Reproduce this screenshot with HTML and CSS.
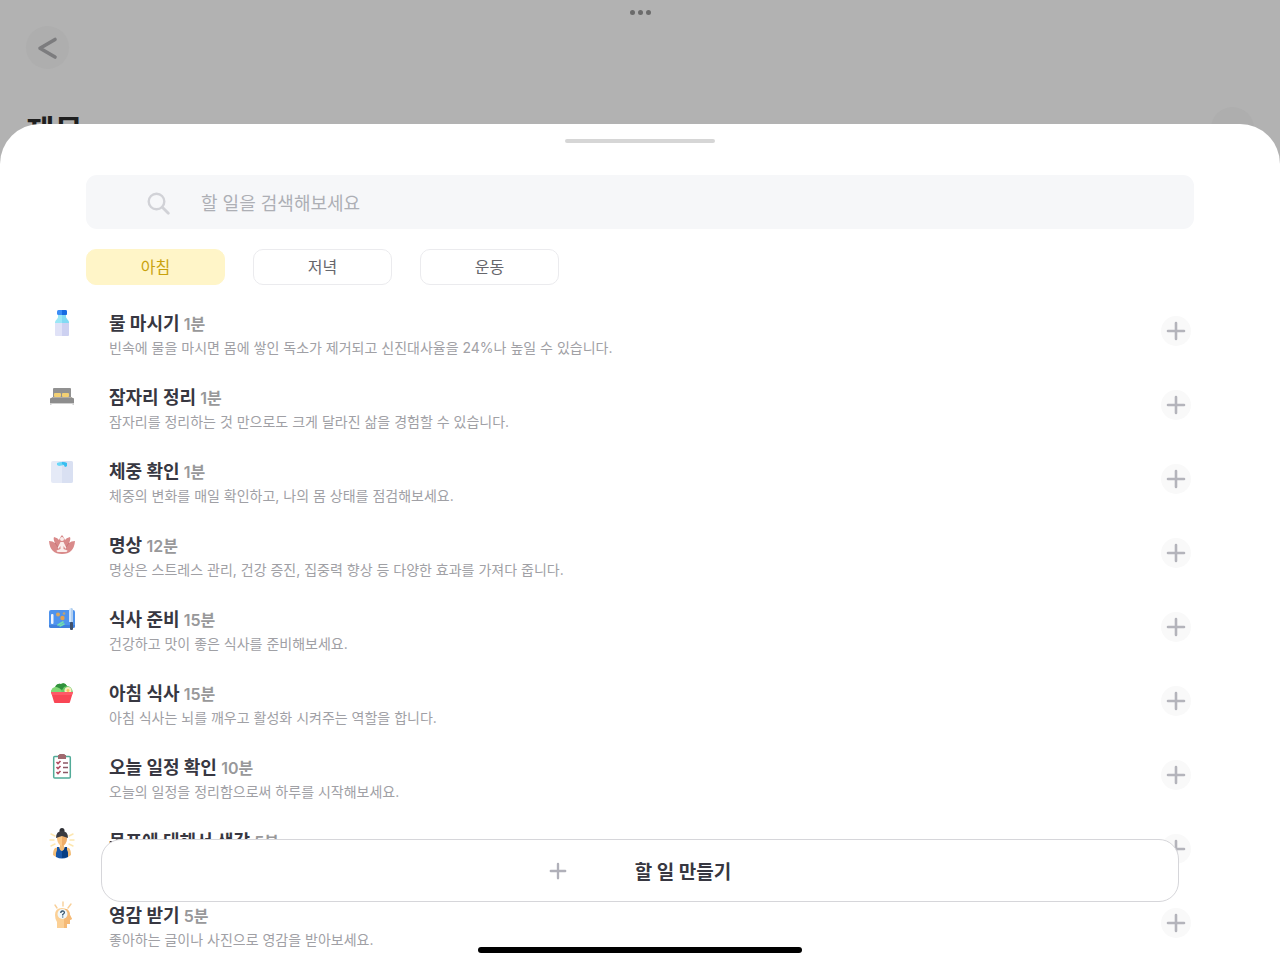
FILE: index.html
```html
<!DOCTYPE html>
<html lang="ko">
<head>
    <meta charset="UTF-8">
    <meta name="viewport" content="width=device-width, initial-scale=1.0">
    <title>할 일 만들기</title>
    <link rel="stylesheet" href="styles.css">
</head>
<body>
    <!-- Shared plus sign -->
    <svg class="defs" width="0" height="0" aria-hidden="true">
        <symbol id="plus" viewBox="0 0 20 20">
            <path d="M10 2v16M2 10h16" fill="none" stroke="currentColor" stroke-width="2.6" stroke-linecap="round"/>
        </symbol>
    </svg>

    <div class="page">
        <div class="dots"><span></span><span></span><span></span></div>
        <button class="round-btn" type="button" aria-label="뒤로">
            <svg width="24" height="24" viewBox="0 0 24 24"><path d="M19 3.5 4 12.300l15 8.700" fill="none" stroke="currentColor" stroke-width="3.6" stroke-linecap="round" stroke-linejoin="round"/></svg>
        </button>
        <div class="page-title">
            <h1>제목</h1>
            <span class="round-btn"></span>
        </div>
    </div>

    <main class="sheet">
        <div class="handle"></div>

        <div class="tools">
            <label class="search">
                <svg width="24" height="24" viewBox="0 0 24 24"><circle cx="10.500" cy="10.500" r="7.800" fill="none" stroke="currentColor" stroke-width="2.4"/><path d="m16.300 16.300 6 6" stroke="currentColor" stroke-width="2.8" stroke-linecap="round"/></svg>
                <input type="text" placeholder="할 일을 검색해보세요" aria-label="할 일을 검색해보세요">
            </label>
            <div class="chips">
                <button class="chip active" type="button">아침</button>
                <button class="chip" type="button">저녁</button>
                <button class="chip" type="button">운동</button>
            </div>
        </div>

        <ul class="todo-list">
            <li class="todo">
                <!-- bottle -->
                <svg class="todo-icon" viewBox="0 0 28 28">
                    <path d="M10 5h8v3c0 2 3 3 3 6H7c0-3 3-4 3-6z" fill="#9be7f6"/>
                    <path d="M14 5h4v3c0 2 3 3 3 6h-7z" fill="#82daf3"/>
                    <path d="M7 14h7v13H8q-1 0-1-1z" fill="#e0e2f7"/>
                    <path d="M14 14h7v12q0 1-1 1h-6z" fill="#cdd1f1"/>
                    <rect x="9" y="1" width="10" height="5" rx="1.5" fill="#3c8df6"/>
                    <path d="M14 1h3.500q1.500 0 1.500 1.500v2q0 1.500-1.500 1.500H14z" fill="#176be2"/>
                </svg>
                <div class="todo-text">
                    <h2>물 마시기 <small>1분</small></h2>
                    <p>빈속에 물을 마시면 몸에 쌓인 독소가 제거되고 신진대사율을 24%나 높일 수 있습니다.</p>
                </div>
                <button class="add-btn" type="button" aria-label="추가"><svg width="22" height="22"><use href="#plus"/></svg></button>
            </li>
            <li class="todo">
                <!-- bed -->
                <svg class="todo-icon" viewBox="0 0 28 28">
                    <path d="M6 5h16q1 0 1 1v9H5V6q0-1 1-1z" fill="#919191"/>
                    <rect x="6" y="10" width="7" height="4" rx="1" fill="#f3d073"/>
                    <rect x="14" y="10" width="7" height="4" rx="1" fill="#f3d073"/>
                    <path d="M4 14h20l1 2H3z" fill="#b1aca5"/>
                    <path d="M3 15h22q1 0 1 1v4H2v-4q0-1 1-1z" fill="#8d8d8d"/>
                    <path d="M2 20h24v2h-1.500v-1h-21v1H2z" fill="#d1d1d1"/>
                </svg>
                <div class="todo-text">
                    <h2>잠자리 정리 <small>1분</small></h2>
                    <p>잠자리를 정리하는 것 만으로도 크게 달라진 삶을 경험할 수 있습니다.</p>
                </div>
                <button class="add-btn" type="button" aria-label="추가"><svg width="22" height="22"><use href="#plus"/></svg></button>
            </li>
            <li class="todo">
                <!-- bathroom scale -->
                <svg class="todo-icon" viewBox="0 0 28 28">
                    <rect x="3" y="4" width="22" height="22" rx="2" fill="#e5eaf7"/>
                    <path d="M14 4h9q2 0 2 2v18q0 2-2 2h-9z" fill="#d9e0f2"/>
                    <path d="M9 6q5-2 10 0v3l-2 1-1-2-5 1-2-1z" fill="#6bd7f7"/>
                    <path d="M14 5q3 0 5 1v3l-2 1-1-2-2-1z" fill="#38bdf0"/>
                </svg>
                <div class="todo-text">
                    <h2>체중 확인 <small>1분</small></h2>
                    <p>체중의 변화를 매일 확인하고, 나의 몸 상태를 점검해보세요.</p>
                </div>
                <button class="add-btn" type="button" aria-label="추가"><svg width="22" height="22"><use href="#plus"/></svg></button>
            </li>
            <li class="todo">
                <!-- lotus -->
                <svg class="todo-icon" viewBox="0 0 28 28">
                    <path d="M1 10q4 0 6 2-2-4-1-6 4 1 5 3 1-3 3-5 2 2 3 5 1-2 5-3 1 2-1 6 2-2 6-2-1 13-13 13T1 10z" fill="#d98a8a"/>
                    <path d="M7 12q3 3 3 6M21 12q-3 3-3 6" fill="none" stroke="#c46f72" stroke-width="0.800"/>
                    <circle cx="14" cy="8" r="2" fill="#fbeeec"/>
                    <path d="M12.500 11h3l3 6-1 .8-2-2.800v3l4 1.500q0 1.500-2 1.500h-7q-2 0-2-1.500l4-1.500v-3l-2 2.800-1-.8z" fill="#fbeeec"/>
                </svg>
                <div class="todo-text">
                    <h2>명상 <small>12분</small></h2>
                    <p>명상은 스트레스 관리, 건강 증진, 집중력 향상 등 다양한 효과를 가져다 줍니다.</p>
                </div>
                <button class="add-btn" type="button" aria-label="추가"><svg width="22" height="22"><use href="#plus"/></svg></button>
            </li>
            <li class="todo">
                <!-- cutting board -->
                <svg class="todo-icon" viewBox="0 0 28 28">
                    <rect x="1" y="5" width="26" height="18" rx="2" fill="#4e93ed"/>
                    <path d="M1 20h26v1q0 2-2 2H3q-2 0-2-2z" fill="#3f80dd"/>
                    <rect x="3" y="9" width="2.500" height="10" rx="1" fill="#f1f7ff"/>
                    <circle cx="10" cy="9.500" r="2" fill="#d9a65e"/>
                    <circle cx="14.500" cy="13" r="2.200" fill="#e2a04d"/>
                    <circle cx="16" cy="8.500" r="1.300" fill="#bfa272"/>
                    <path d="m10 20 5-3M12 21l4-2" stroke="#72dfae" stroke-width="1.600" stroke-linecap="round"/>
                    <path d="M23 3q2 0 2 2v12h-4V6q0-3 2-3z" fill="#d2e6fb"/>
                    <path d="M23 3q2 0 2 2v12h-2z" fill="#b2cfef"/>
                    <rect x="22" y="17" width="3" height="8" rx="1" fill="#40506b"/>
                </svg>
                <div class="todo-text">
                    <h2>식사 준비 <small>15분</small></h2>
                    <p>건강하고 맛이 좋은 식사를 준비해보세요.</p>
                </div>
                <button class="add-btn" type="button" aria-label="추가"><svg width="22" height="22"><use href="#plus"/></svg></button>
            </li>
            <li class="todo">
                <!-- salad bowl -->
                <svg class="todo-icon" viewBox="0 0 28 28">
                    <path d="M3 14q0-5 5-6 1-4 5-3 4-2 6 2 5 0 6 7z" fill="#69ca66"/>
                    <path d="M7 8q2-4 6-3 4-2 6 2l-3 1-2 3-3-2z" fill="#31913c"/>
                    <path d="M3 14q0-6 5-6 5 1 6 6z" fill="#82d875"/>
                    <circle cx="20" cy="11.500" r="3.500" fill="#f7edbf"/>
                    <circle cx="20" cy="11.500" r="1.500" fill="#f3c75a"/>
                    <path d="M3 13h22l-3 10q0 1-1 1H7q-1 0-1-1z" fill="#f94655"/>
                    <path d="M3 13h22l-1 3H4z" fill="#ff5967"/>
                </svg>
                <div class="todo-text">
                    <h2>아침 식사 <small>15분</small></h2>
                    <p>아침 식사는 뇌를 깨우고 활성화 시켜주는 역할을 합니다.</p>
                </div>
                <button class="add-btn" type="button" aria-label="추가"><svg width="22" height="22"><use href="#plus"/></svg></button>
            </li>
            <li class="todo">
                <!-- clipboard -->
                <svg class="todo-icon" viewBox="0 0 28 28">
                    <rect x="5.700" y="3.500" width="16.600" height="21.500" rx="1" fill="#fff" stroke="#52ab98" stroke-width="1.500"/>
                    <path d="M11 2q0-1 1-1h4q1 0 1 1h1v4h-8V2z" fill="#a0696f"/>
                    <path d="m8.500 9 1.500 1.500L12.500 8M8.500 14l1.500 1.500 2.500-2.500M8.500 19l1.500 1.500 2.500-2.500" fill="none" stroke="#b04d62" stroke-width="1.700"/>
                    <path d="M15 10h5M15 14.500h5M15 19.500h5" stroke="#8d5865" stroke-width="1.300"/>
                </svg>
                <div class="todo-text">
                    <h2>오늘 일정 확인 <small>10분</small></h2>
                    <p>오늘의 일정을 정리함으로써 하루를 시작해보세요.</p>
                </div>
                <button class="add-btn" type="button" aria-label="추가"><svg width="22" height="22"><use href="#plus"/></svg></button>
            </li>
            <li class="todo">
                <!-- thinking person -->
                <svg class="todo-icon tall" viewBox="0 0 28 32">
                    <path d="M3 7l4 2M2 13h4M3 19l4-2M25 7l-4 2M26 13h-4M25 19l-4-2" stroke="#fde7b0" stroke-width="1.400" stroke-linecap="round"/>
                    <path d="M12 16h4v4l5 1q2 2 2 7l-3 2H8l-3-2q0-5 2-7l5-1z" fill="#f2bd79"/>
                    <path d="M9 8h10v4q-1 6-5 7-4-1-5-7z" fill="#fbc785"/>
                    <path d="M14 8h5v4q-1 6-5 7z" fill="#efad68"/>
                    <circle cx="14" cy="3.500" r="2.500" fill="#303136"/>
                    <path d="M8 11q0-7 6-7t6 7l-3-1-3-1-3 1z" fill="#3a3b40"/>
                    <path d="M9 20h2q1 4 3 4t3-4h2v3l1 3v4q-6 3-12 0v-4l1-3z" fill="#1756a8"/>
                    <path d="M14 24q2 0 3-4h2v3l1 3v4l-6 1z" fill="#063d83"/>
                </svg>
                <div class="todo-text">
                    <h2>목표에 대해서 생각 <small>5분</small></h2>
                </div>
                <button class="add-btn" type="button" aria-label="추가"><svg width="22" height="22"><use href="#plus"/></svg></button>
            </li>
            <li class="todo">
                <!-- head with a question -->
                <svg class="todo-icon" viewBox="0 0 28 28">
                    <path d="m7 4 2 3M15 1v4M23 3l-3 4" stroke="#f8cf98" stroke-width="1.400" stroke-linecap="round"/>
                    <path d="M7 14q0-7 7-7t8 7l2 4-2 1v4h-3v4H9v-6q-2-3-2-7z" fill="#fbd096"/>
                    <path d="M19 8q3 2 3 6l2 4-2 1v4h-3v4h-3V8z" fill="#f5ba77"/>
                    <circle cx="14.500" cy="13" r="5" fill="#f0f8fb"/>
                    <path d="M12.800 12q0-2 1.800-2t1.800 1.500q0 1-1.700 2v1M14.700 15.600v.8" fill="none" stroke="#35546d" stroke-width="1.300"/>
                </svg>
                <div class="todo-text">
                    <h2>영감 받기 <small>5분</small></h2>
                    <p>좋아하는 글이나 사진으로 영감을 받아보세요.</p>
                </div>
                <button class="add-btn" type="button" aria-label="추가"><svg width="22" height="22"><use href="#plus"/></svg></button>
            </li>
        </ul>

        <button class="create-btn" type="button">
            <svg width="18" height="18"><use href="#plus"/></svg>
            <span>할 일 만들기</span>
        </button>
        <div class="home-bar"></div>
    </main>
</body>
</html>
```

FILE: styles.css
```css
:root {
    --dim: #b2b2b2;
    --text: #373741;
    --muted: #a0a0a5;
    --line: #d6d6da;
}

* {
    box-sizing: border-box;
    margin: 0;
    padding: 0;
}

body {
    font-family: Inter, "Noto Sans CJK KR", sans-serif;
    background: var(--dim);
    color: var(--text);
    height: 100vh;
    overflow: hidden;
}

button,
input {
    font: inherit;
    color: inherit;
    border: none;
    background: none;
}

button {
    cursor: pointer;
}

.defs {
    position: absolute;
}

/* Dimmed page behind the sheet */
.page {
    padding: 10px 26px;
}

.dots {
    display: flex;
    justify-content: center;
    gap: 3px;
    height: 16px;
}

.dots span {
    width: 5px;
    height: 5px;
    border-radius: 50%;
    background: #6b6b6b;
}

.round-btn {
    display: flex;
    align-items: center;
    justify-content: center;
    width: 43px;
    height: 43px;
    border-radius: 50%;
    background: #aeaeae;
    color: #7c7c7e;
}

.page-title {
    display: flex;
    align-items: flex-start;
    justify-content: space-between;
    margin-top: 38px;
}

.page-title h1 {
    font-size: 31px;
    line-height: 48px;
    color: #1f1f1f;
}

/* Bottom sheet */
.sheet {
    position: absolute;
    top: 124px;
    right: 0;
    bottom: 0;
    left: 0;
    padding-top: 15px;
    border-radius: 40px 40px 0 0;
    background: #fff;
    overflow: hidden;
}

.handle {
    width: 150px;
    height: 4px;
    margin: 0 auto;
    border-radius: 2px;
    background: #d6d6d6;
}

.tools {
    padding: 32px 86px 0;
}

.search {
    display: flex;
    align-items: center;
    gap: 31px;
    height: 54px;
    padding: 2px 60px 0;
    border-radius: 11px;
    background: #f6f7f9;
    color: #d1d2d7;
}

.search input {
    flex: 1;
    outline: none;
    font-size: 18px;
    color: var(--text);
}

.search input::placeholder {
    color: #adafb5;
    opacity: 1;
}

.chips {
    display: flex;
    gap: 28px;
    margin-top: 20px;
}

.chip {
    width: 139px;
    height: 36px;
    padding-bottom: 2px;
    border: 1px solid #ebebee;
    border-radius: 10px;
    font-size: 16px;
    color: #66666c;
}

.chip.active {
    border-color: #fff5c8;
    background: #fff5c8;
    color: #c9a20c;
}

/* Todo rows */
.todo-list {
    list-style: none;
    padding: 9px 89px 0 48px;
}

.todo {
    display: grid;
    grid-template-columns: 28px 1fr 30px;
    column-gap: 33px;
    align-items: center;
    height: 74px;
}

.todo-icon {
    align-self: start;
    width: 28px;
    height: 28px;
    margin-top: 15px;
}

.todo-icon.tall {
    height: 32px;
}

.todo-text {
    align-self: start;
    padding-top: 14px;
}

.todo h2 {
    font-size: 18px;
    line-height: 32px;
    font-weight: 700;
}

.todo small {
    font-size: 16px;
    font-weight: 600;
    color: #98989a;
}

.todo p {
    font-size: 14px;
    line-height: 16px;
    color: var(--muted);
}

.add-btn {
    display: flex;
    align-items: center;
    justify-content: center;
    width: 30px;
    height: 30px;
    border-radius: 50%;
    background: #f9f9f9;
    color: #b4b4bb;
}

.add-btn svg {
    width: 20px;
    height: 20px;
}

/* Floating create button */
.create-btn {
    position: absolute;
    right: 101px;
    bottom: 58px;
    left: 101px;
    display: flex;
    align-items: center;
    justify-content: center;
    gap: 68px;
    height: 63px;
    border: 1px solid var(--line);
    border-radius: 20px;
    background: #fff;
    font-size: 19px;
    font-weight: 700;
}

.create-btn svg {
    color: #b0b0b9;
}

.home-bar {
    position: absolute;
    right: 0;
    bottom: 7px;
    left: 0;
    width: 324px;
    height: 6px;
    margin: 0 auto;
    border-radius: 3px;
    background: #000;
}
```
